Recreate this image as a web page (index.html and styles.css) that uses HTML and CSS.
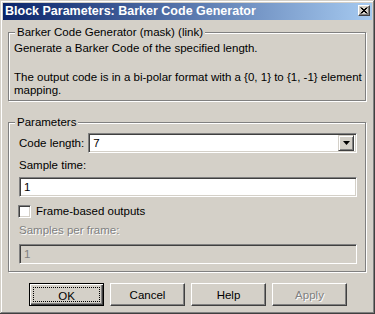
FILE: index.html
```html
<!DOCTYPE html>
<html lang="en">
<head>
    <meta charset="UTF-8">
    <title>Block Parameters: Barker Code Generator</title>
    <link rel="stylesheet" href="styles.css">
</head>
<body>
    <div class="window">
        <div class="titlebar">
            <span class="title">Block Parameters: Barker Code Generator</span>
            <span class="close">
                <svg width="8" height="7" viewBox="0 0 8 7"><path d="M0.5 0.5 L6.5 6.5 M1.5 0.5 L7.5 6.5 M6.5 0.5 L0.5 6.5 M7.5 0.5 L1.5 6.5" stroke="#000" stroke-width="1"/></svg>
            </span>
        </div>

        <div class="content">
            <fieldset class="group desc">
                <legend>Barker Code Generator (mask) (link)</legend>
                <p>Generate a Barker Code of the specified length.</p>
                <p class="para">The output code is in a bi-polar format with a {0, 1} to {1, -1} element mapping.</p>
            </fieldset>

            <fieldset class="group params">
                <legend>Parameters</legend>
                <div class="combo-row">
                    <span class="combo-label">Code length:</span>
                    <div class="combo">
                        <span class="combo-value">7</span>
                        <span class="combo-btn">
                            <svg width="7" height="4" viewBox="0 0 7 4"><path d="M0 0 H7 L3.5 4 Z" fill="#000"/></svg>
                        </span>
                    </div>
                </div>
                <div class="field-label">Sample time:</div>
                <div class="edit">1</div>
                <div class="check-row">
                    <span class="checkbox"></span>
                    <span>Frame-based outputs</span>
                </div>
                <div class="field-label disabled">Samples per frame:</div>
                <div class="edit off">1</div>
            </fieldset>

            <div class="buttons">
                <button class="btn default"><span class="focus">OK</span></button>
                <button class="btn">Cancel</button>
                <button class="btn">Help</button>
                <button class="btn disabled">Apply</button>
            </div>
        </div>
    </div>
</body>
</html>
```

FILE: styles.css
```css
* {
    box-sizing: border-box;
}

body {
    margin: 0;
    font-family: "Liberation Sans", Arial, sans-serif;
    font-size: 11.5px;
    line-height: 13px;
    color: #000;
    background: #d4d0c8;
}

.window {
    width: 375px;
    height: 314px;
    padding: 3px;
    background: #d4d0c8;
    box-shadow: inset -1px -1px #404040, inset 1px 1px #d4d0c8,
                inset -2px -2px #808080, inset 2px 2px #fff;
    display: flex;
    flex-direction: column;
}

.titlebar {
    height: 17px;
    padding: 0 2px 0 2px;
    display: flex;
    align-items: center;
    background: linear-gradient(to right, #0a246a, #a6caf0);
    color: #fff;
    font-size: 12.5px;
    font-weight: bold;
}

.close {
    margin-left: auto;
    align-self: flex-start;
    margin-top: 2px;
    width: 12px;
    height: 11px;
    background: #d4d0c8;
    border: 1px solid;
    border-color: #fff #404040 #404040 #fff;
    box-shadow: inset -1px -1px #808080;
    display: flex;
    align-items: center;
    justify-content: center;
}

.close svg {
    display: block;
}

.content {
    padding: 6px 6px 0 5px;
}

.group {
    margin: 0;
    border: 1px solid #808080;
    box-shadow: inset 1px 1px #fff, 1px 1px #fff;
}

.group legend {
    padding: 0 2px;
    margin-left: 1px;
    background: #d4d0c8;
}

.group p {
    margin: 0;
}

.desc {
    padding: 3px 2px 3px 5px;
}

.desc .para {
    margin-top: 16px;
}

.params {
    margin-top: 15px;
    padding: 4px 8px 7px 10px;
}

.params legend {
    margin-left: -4px;
}

.combo-row {
    display: flex;
    align-items: center;
    gap: 4px;
}

.combo-label {
    flex-shrink: 0;
    white-space: nowrap;
}

.combo {
    flex: 1;
    height: 20px;
    display: flex;
    align-items: center;
    background: #fff;
    border: 1px solid;
    border-color: #808080 #fff #fff #808080;
    box-shadow: inset 1px 1px #404040, inset -1px -1px #d4d0c8;
    padding: 2px;
}

.combo-value {
    flex: 1;
    padding-left: 2px;
}

.combo-btn {
    width: 16px;
    height: 16px;
    background: #d4d0c8;
    border: 1px solid;
    border-color: #d4d0c8 #404040 #404040 #d4d0c8;
    box-shadow: inset 1px 1px #fff, inset -1px -1px #808080;
    display: flex;
    align-items: center;
    justify-content: center;
}

.field-label {
    margin-top: 6px;
}

.disabled,
.btn.disabled {
    color: #808080;
    text-shadow: 1px 1px #fff;
}

.edit {
    margin-top: 5px;
    height: 20px;
    padding: 3px 4px;
    background: #fff;
    border: 1px solid;
    border-color: #808080 #fff #fff #808080;
    box-shadow: inset 1px 1px #404040, inset -1px -1px #d4d0c8;
}

.edit.off {
    background: #d4d0c8;
    color: #808080;
    margin-top: 7px;
}

.check-row {
    margin-top: 8px;
    display: flex;
    align-items: center;
    gap: 5px;
    margin-left: -1px;
}

.checkbox {
    width: 13px;
    height: 13px;
    background: #fff;
    border: 1px solid;
    border-color: #808080 #fff #fff #808080;
    box-shadow: inset 1px 1px #404040, inset -1px -1px #d4d0c8;
}

.buttons {
    margin-top: 11px;
    display: flex;
    justify-content: center;
    gap: 6px;
    padding-left: 2px;
}

.btn {
    width: 75px;
    height: 23px;
    padding: 0;
    font-family: inherit;
    font-size: 11.5px;
    color: #000;
    background: #d4d0c8;
    border: 1px solid;
    border-color: #fff #404040 #404040 #fff;
    box-shadow: inset -1px -1px #808080;
}

.btn.default {
    border: 1px solid #000;
    box-shadow: inset 1px 1px #fff, inset -1px -1px #404040, inset -2px -2px #808080;
    padding: 3px;
}

.focus {
    display: block;
    height: 100%;
    line-height: 13px;
    padding-top: 2px;
    border: 1px dotted #000;
}
```
